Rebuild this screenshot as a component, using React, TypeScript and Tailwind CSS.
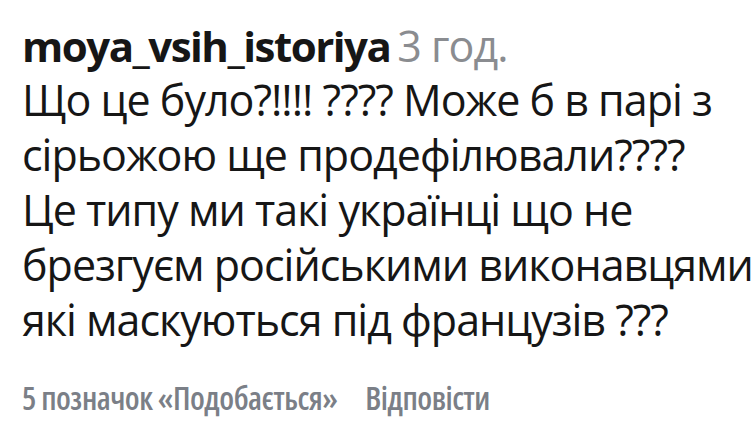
const lines = [
  "Що це було?!!!! ???? Може б в парі з",
  "сірьожою ще продефілювали????",
  "Це типу ми такі українці що не",
  "брезгуєм російськими виконавцями",
  "які маскуються під французів ???",
];

export default function App() {
  return (
    <div className="bg-white w-[753px] h-[441px] overflow-hidden pl-[22px] pt-[19px] font-['Open_Sans',sans-serif]">
      <div className="flex items-baseline whitespace-nowrap leading-[53px]">
        <span className="text-[42px] tracking-[-1.5px] font-bold text-[#161616]">moya_vsih_istoriya</span>
        <span className="ml-[7px] text-[43px] tracking-[-1px] text-[#8a8c90]">3 год.</span>
      </div>
      <div className="text-[43px] leading-[55px] tracking-[-1px] text-[#161616]">
        {lines.map((l) => (
          <div key={l} className="whitespace-nowrap">
            {l}
          </div>
        ))}
      </div>
      <div className="mt-[31px] flex gap-[28px] whitespace-nowrap text-[32px] leading-[40px] tracking-[-0.5px] font-semibold text-[#7b7f87] [font-stretch:75%]">
        <span>5 позначок «Подобається»</span>
        <span>Відповісти</span>
      </div>
    </div>
  );
}
